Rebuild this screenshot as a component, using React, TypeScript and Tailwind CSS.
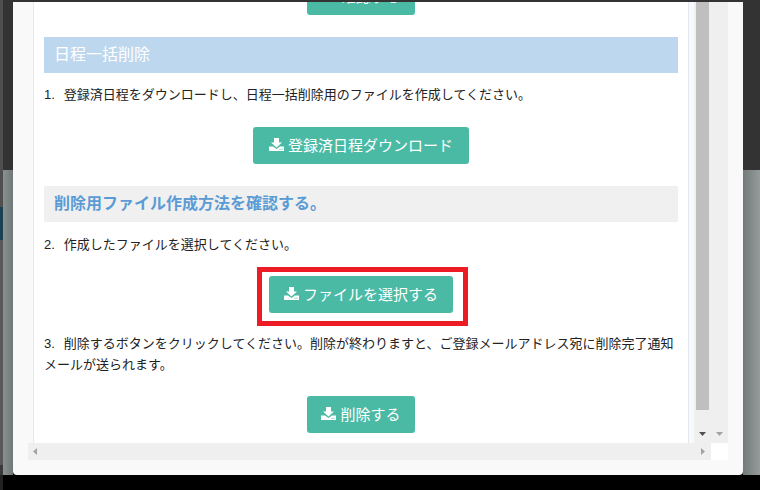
const FONT = "font-['Liberation_Sans','Noto_Sans_CJK_JP',sans-serif]";

function Glyph() {
  return (
    <svg width="15" height="13" viewBox="0 0 15 13" className="shrink-0 -mt-[2px]" aria-hidden="true">
      <path d="M5 0h5v4.5h3L7.5 9.5 2 4.5h3z" fill="#fff" />
      <path d="M0 8.5h4L7.5 11 11 8.5h4V13H0z" fill="#fff" />
      <rect x="10.5" y="10.8" width="1" height="1" fill="#4bbaa5" />
      <rect x="12.5" y="10.8" width="1" height="1" fill="#4bbaa5" />
    </svg>
  );
}

function Btn({ label, w }: { label: string; w: string }) {
  return (
    <div className={`${w} h-[37px] rounded-[3px] bg-[#4bbaa5] text-white text-[15px] flex items-center justify-center gap-[4px]`}>
      <Glyph />
      <span>{label}</span>
    </div>
  );
}

function Tri({ dir, color }: { dir: "d" | "l" | "r"; color: string }) {
  const pts = dir === "d" ? "0,0 7,0 3.5,4" : dir === "l" ? "4,0 4,7 0,3.5" : "0,0 0,7 4,3.5";
  return (
    <svg width={dir === "d" ? 7 : 4} height={dir === "d" ? 4 : 7} aria-hidden="true">
      <polygon points={pts} fill={color} />
    </svg>
  );
}

export default function App() {
  return (
    <div className={`${FONT} relative w-[760px] h-[490px] overflow-hidden bg-black text-[13px] leading-[21px] text-[#222]`}>
      {/* page behind the dialog */}
      <div className="absolute left-0 top-0 w-[760px] h-[475px] flex flex-col">
        <div className="h-[170px] bg-[#333]" />
        <div className="flex-1 flex">
          <div className="w-[13px] bg-gradient-to-r from-[#929999] to-[#6f7777]" />
          <div className="flex-1" />
          <div className="w-[17px] bg-gradient-to-r from-[#727a7a] to-[#969c9c]" />
        </div>
      </div>
      <div className="absolute left-0 top-0 w-[3px] h-[490px] flex flex-col">
        <div className="h-[207px] bg-[#4f4f4f]" />
        <div className="h-[33px] bg-[#1c4154]" />
        <div className="h-[225px] bg-[#585858]" />
        <div className="h-[10px] bg-[#3a3a3a]" />
        <div className="flex-1 bg-[#222]" />
      </div>

      {/* dialog */}
      <div className="absolute left-[13px] top-[2px] w-[730px] h-[473px] rounded-b-[4px] bg-[#f9f9f9] px-[15px] pb-[15px] flex flex-col">
        <div className="h-[441px] flex">
          <div className="w-[666px] pl-[5px] pr-[5px]">
            <div className="h-full overflow-hidden bg-white border-x border-[#e3e9f0] px-[10px]">
              <div className="-mt-[24px] flex justify-center">
                <Btn label="確認する" w="w-[108px]" />
              </div>
              <div className="mt-[22px] h-[36px] bg-[#bdd7ee] pl-[10px] pb-[2px] flex items-center text-white text-[16px]">日程一括削除</div>
              <p className="mt-[11px]"><span className="mr-[9px]">1.</span>登録済日程をダウンロードし、日程一括削除用のファイルを作成してください。</p>
              <div className="mt-[22px] flex justify-center">
                <Btn label="登録済日程ダウンロード" w="w-[216px]" />
              </div>
              <div className="mt-[22px] h-[36px] bg-[#f0f0f0] pl-[10px] pb-[2px] flex items-center text-[#5b9bd5] text-[16px] font-bold">削除用ファイル作成方法を確認する。</div>
              <p className="mt-[12px]"><span className="mr-[9px]">2.</span>作成したファイルを選択してください。</p>
              <div className="mt-[12px] ml-[213px] w-[211px] h-[59px] border-[5px] border-[#ed1c24] pt-[4px] pl-[7px]">
                <Btn label="ファイルを選択する" w="w-[184px]" />
              </div>
              <p className="mt-[7px]"><span className="mr-[9px]">3.</span>削除するボタンをクリックしてください。削除が終わりますと、ご登録メールアドレス宛に削除完了通知メールが送られます。</p>
              <div className="mt-[21px] flex justify-center">
                <Btn label="削除する" w="w-[108px]" />
              </div>
            </div>
          </div>
          <div className="w-[17px] bg-[#efefef] flex flex-col items-center">
            <div className="w-[13px] h-[408px] bg-[#bfbfbf]" />
            <div className="mt-[22px] h-[4px] flex"><Tri dir="d" color="#505050" /></div>
          </div>
          <div className="w-[17px] bg-[#efefef] flex flex-col items-center">
            <div className="mt-[430px] h-[4px] flex"><Tri dir="d" color="#a3a3a3" /></div>
          </div>
        </div>
        <div className="h-[17px] flex">
          <div className="w-[683px] bg-[#efefef] flex items-center justify-between pl-[5px] pr-[6px]">
            <Tri dir="l" color="#a3a3a3" />
            <Tri dir="r" color="#a3a3a3" />
          </div>
          <div className="w-[17px] bg-white" />
        </div>
      </div>
    </div>
  );
}
